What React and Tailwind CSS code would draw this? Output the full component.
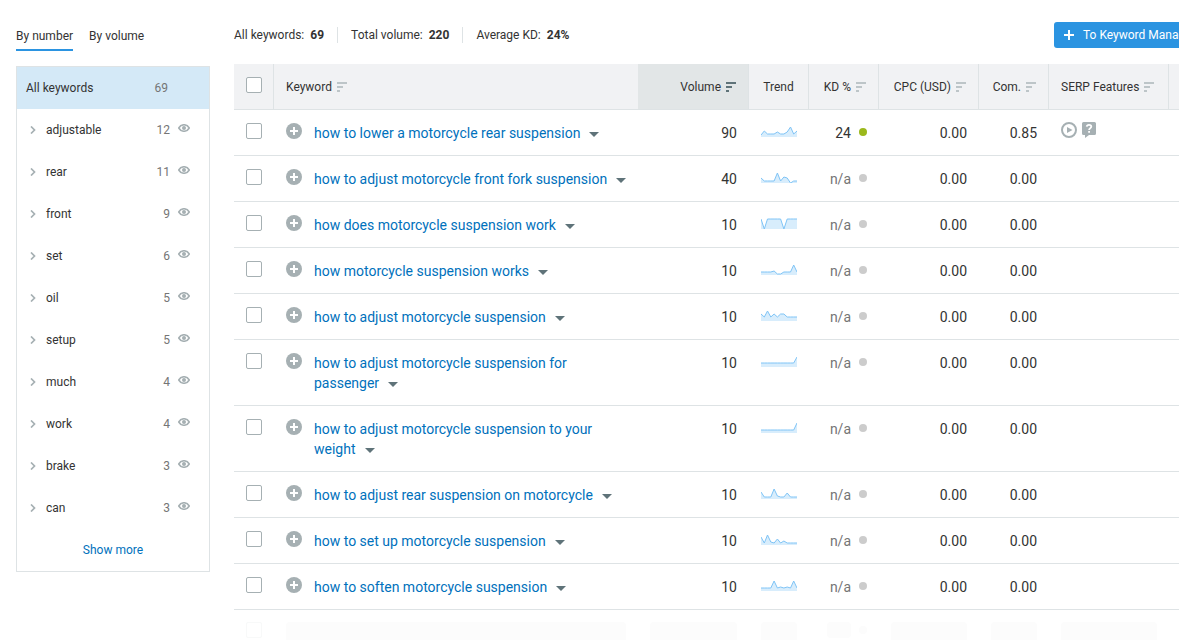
import { useState } from "react";

const groups = [
  { name: "adjustable", count: 12 },
  { name: "rear", count: 11 },
  { name: "front", count: 9 },
  { name: "set", count: 6 },
  { name: "oil", count: 5 },
  { name: "setup", count: 5 },
  { name: "much", count: 4 },
  { name: "work", count: 4 },
  { name: "brake", count: 3 },
  { name: "can", count: 3 },
];

// trend: twelve monthly points, 0 is the top of the chart and 11 the bottom
const keywords = [
  {
    keyword: "how to lower a motorcycle rear suspension",
    volume: 90,
    trend: [9, 5, 8, 8, 8, 6, 8, 8, 6, 1, 8, 5],
    kd: 24,
    com: "0.85",
    serp: true,
  },
  {
    keyword: "how to adjust motorcycle front fork suspension",
    volume: 40,
    trend: [6, 9, 9, 9, 9, 1, 9, 5, 6, 11, 9, 9],
    com: "0.00",
  },
  {
    keyword: "how does motorcycle suspension work",
    volume: 10,
    trend: [1, 11, 1, 1, 1, 1, 1, 11, 1, 1, 1, 1],
    com: "0.00",
  },
  {
    keyword: "how motorcycle suspension works",
    volume: 10,
    trend: [8, 8, 8, 8, 7, 10, 10, 8, 8, 8, 1, 8],
    com: "0.00",
  },
  {
    keyword: "how to adjust motorcycle suspension",
    volume: 10,
    trend: [4, 7, 1, 7, 4, 7, 4, 4, 7, 7, 7, 7],
    com: "0.00",
  },
  {
    keyword: "how to adjust motorcycle suspension for passenger",
    volume: 10,
    trend: [7, 7, 7, 7, 7, 7, 7, 7, 7, 7, 7, 1],
    com: "0.00",
  },
  {
    keyword: "how to adjust motorcycle suspension to your weight",
    volume: 10,
    trend: [8, 8, 8, 8, 8, 8, 8, 8, 8, 8, 8, 1],
    com: "0.00",
  },
  {
    keyword: "how to adjust rear suspension on motorcycle",
    volume: 10,
    trend: [4, 9, 9, 9, 1, 8, 9, 9, 5, 9, 9, 9],
    com: "0.00",
  },
  {
    keyword: "how to set up motorcycle suspension",
    volume: 10,
    trend: [3, 9, 1, 8, 9, 5, 9, 7, 9, 9, 9, 9],
    com: "0.00",
  },
  {
    keyword: "how to soften motorcycle suspension",
    volume: 10,
    trend: [8, 8, 8, 8, 1, 8, 7, 8, 7, 8, 1, 8],
    com: "0.00",
  },
];

function SortIcon({ active }) {
  return (
    <svg
      viewBox="0 0 10 10"
      className={
        active
          ? "w-[10px] h-[10px] shrink-0 text-[#5f7379]"
          : "w-[10px] h-[10px] shrink-0 text-[#bdc5c8]"
      }
      fill="currentColor"
    >
      <path d="M0 0h10v2H0zM0 4h6v2H0zM0 8h3v2H0z" />
    </svg>
  );
}

function EyeIcon() {
  return (
    <svg viewBox="0 0 12 8" className="w-3 h-2" fill="none">
      <path
        d="M0.7 4C2 1.8 3.800 0.700 6 0.700S10 1.800 11.300 4C10 6.200 8.200 7.300 6 7.300S2 6.200 0.700 4z"
        stroke="#a6b0b3"
        strokeWidth="1.500"
      />
      <circle cx="6" cy="4" r="2" fill="#a6b0b3" />
    </svg>
  );
}

function PlusCircleIcon() {
  return (
    <svg viewBox="0 0 16 16" className="w-4 h-4">
      <circle cx="8" cy="8" r="8" fill="#a6b0b3" />
      <path d="M7 4h2v3h3v2H9v3H7V9H4V7h3z" fill="#fff" />
    </svg>
  );
}

function Trend({ points }) {
  const line = points
    .map((y, i) => `${((i * 36) / 11).toFixed(1)},${y}`)
    .join(" ");

  return (
    <svg viewBox="0 0 36 11" className="w-9 h-[11px] mt-[3px]">
      <polygon points={`0,11 ${line} 36,11`} fill="#d8edfc" />
      <polyline points={line} fill="none" stroke="#7fc4f6" strokeWidth="1" />
    </svg>
  );
}

function Checkbox({ label }) {
  return (
    <input
      type="checkbox"
      aria-label={label}
      className="block appearance-none w-4 h-4 rounded-[2px] border border-[#a6b0b3] bg-white checked:bg-[#2b94e1]"
    />
  );
}

function HeadCell({ children, active, className }) {
  return (
    <th
      className={`h-[46px] px-3 font-normal text-xs border-b border-[#dee3e5] ${className}`}
    >
      <button type="button" className="inline-flex items-center gap-[5px]">
        {children}
        <SortIcon active={active} />
      </button>
    </th>
  );
}

function Sidebar() {
  const [tab, setTab] = useState("number");
  const activeTab = "pb-[5px] border-b-2 border-[#2b94e1]";
  const idleTab = "pb-[5px] border-b-2 border-transparent";

  return (
    <aside className="w-[194px] shrink-0 text-xs">
      <div className="flex gap-4 pt-7 leading-4">
        <button
          type="button"
          className={tab === "number" ? activeTab : idleTab}
          onClick={() => setTab("number")}
        >
          By number
        </button>
        <button
          type="button"
          className={tab === "volume" ? activeTab : idleTab}
          onClick={() => setTab("volume")}
        >
          By volume
        </button>
      </div>

      <div className="mt-[15px] border border-[#dee3e5]">
        <button
          type="button"
          className="w-full h-[42px] flex items-center justify-between pl-[9px] pr-[41px] bg-[#d4e9f7]"
        >
          All keywords
          <span className="text-[#757575]">69</span>
        </button>
        <ul>
          {groups.map((group) => (
            <li key={group.name} className="h-[42px] flex items-center">
              <button type="button" className="flex flex-1 items-center">
                <svg
                  viewBox="0 0 6 8"
                  className="w-[6px] h-2 ml-[13px] mr-[10px]"
                  fill="none"
                  stroke="#a6b0b3"
                  strokeWidth="1.700"
                >
                  <path d="M1 0.500L4.500 4L1 7.500" />
                </svg>
                {group.name}
                <span className="ml-auto text-[#757575]">{group.count}</span>
              </button>
              <button
                type="button"
                aria-label={`Hide ${group.name}`}
                className="ml-2 mr-[19px] mb-1"
              >
                <EyeIcon />
              </button>
            </li>
          ))}
        </ul>
        <button
          type="button"
          className="w-full h-[42px] flex items-center justify-center text-[#0071bc]"
        >
          Show more
        </button>
      </div>
    </aside>
  );
}

function Toolbar() {
  return (
    <div className="h-16 pt-[22px] flex items-start justify-between text-xs">
      <dl className="flex items-center pt-[5px] leading-4">
        <div className="flex gap-[6px] pr-[13px]">
          <dt>All keywords:</dt>
          <dd className="font-bold">69</dd>
        </div>
        <div className="flex gap-[6px] px-[13px] border-l border-[#dee3e5]">
          <dt>Total volume:</dt>
          <dd className="font-bold">220</dd>
        </div>
        <div className="flex gap-[6px] pl-[13px] border-l border-[#dee3e5]">
          <dt>Average KD:</dt>
          <dd className="font-bold">24%</dd>
        </div>
      </dl>
      <button
        type="button"
        className="w-[160px] h-[26px] pl-[10px] flex items-center gap-[9px] rounded-[3px] bg-[#2b94e1] text-white whitespace-nowrap"
      >
        <svg viewBox="0 0 10 10" className="w-[10px] h-[10px]" fill="#fff">
          <path d="M4 0h2v4h4v2H6v4H4V6H0V4h4z" />
        </svg>
        To Keyword Manager
      </button>
    </div>
  );
}

function KeywordRow({ row }) {
  return (
    <tr className="align-top [&>td]:border-b [&>td]:border-[#dee3e5]">
      <td className="pt-[13px] pb-3 pl-3">
        <Checkbox label={`Select ${row.keyword}`} />
      </td>
      <td className="pt-[13px] pb-3 pl-3 pr-1">
        <div className="flex items-start gap-3">
          <button type="button" aria-label={`Add ${row.keyword}`}>
            <PlusCircleIcon />
          </button>
          <div>
            <a href="#keyword" className="text-[#0071bc]">
              {row.keyword}
            </a>
            <svg
              viewBox="0 0 10 5"
              className="inline-block align-middle w-[10px] h-[5px] ml-[9px]"
              fill="#5f7379"
            >
              <path d="M0 0h10L5 5z" />
            </svg>
          </div>
        </div>
      </td>
      <td className="pt-[13px] pb-3 pr-3 text-right">{row.volume}</td>
      <td className="pt-[13px] pb-3 pl-3">
        <Trend points={row.trend} />
      </td>
      <td className="pt-[13px] pb-3 pr-3">
        <div className="flex items-center justify-end gap-2">
          <span className={row.kd ? "" : "text-[#757575]"}>
            {row.kd ?? "n/a"}
          </span>
          <span
            className={
              row.kd
                ? "w-2 h-2 mb-[2px] rounded-full bg-[#9bb81c]"
                : "w-2 h-2 mb-[2px] rounded-full bg-[#cccccc]"
            }
          />
        </div>
      </td>
      <td className="pt-[13px] pb-3 pr-3 text-right">0.00</td>
      <td className="pt-[13px] pb-3 pr-3 text-right">{row.com}</td>
      <td className="pt-3 pb-3 pl-3">
        {row.serp && (
          <div className="flex gap-[5px]">
            <svg viewBox="0 0 16 16" className="w-4 h-4" fill="none">
              <circle cx="8" cy="8" r="7" stroke="#a6b0b3" strokeWidth="2" />
              <path d="M6 5l5.500 3L6 11z" fill="#a6b0b3" />
            </svg>
            <svg viewBox="0 0 14 16" className="w-[14px] h-4" fill="none">
              <path
                d="M1.500 0h11A1.500 1.500 0 0 1 14 1.500v10a1.500 1.500 0 0 1-1.500 1.500H7l-4 3v-3H1.500A1.500 1.500 0 0 1 0 11.500v-10A1.500 1.500 0 0 1 1.500 0z"
                fill="#a6b0b3"
              />
              <path
                d="M4.700 4.600C4.900 3.300 5.800 2.800 7 2.800c1.300 0 2.300 0.600 2.300 1.800 0 1.700-2.200 1.500-2.200 3.300"
                stroke="#fff"
                strokeWidth="1.800"
              />
              <path d="M6.200 9h1.800v1.700H6.200z" fill="#fff" />
            </svg>
          </div>
        )}
      </td>
      <td />
    </tr>
  );
}

function SkeletonRow() {
  return (
    <tr className="align-top">
      <td className="pt-3 pl-3">
        <div className="w-4 h-4 rounded-[2px] border border-[#f8f9f9]" />
      </td>
      <td className="pt-3 pl-3 pr-3">
        <div className="h-7 rounded bg-[#fcfcfc]" />
      </td>
      <td className="pt-3 pl-3 pr-3">
        <div className="h-7 rounded bg-[#fcfcfc]" />
      </td>
      <td className="pt-3 pl-3 pr-3">
        <div className="h-7 rounded bg-[#fcfcfc]" />
      </td>
      <td className="pt-3 pr-3">
        <div className="flex items-center justify-end gap-2">
          <div className="w-6 h-4 rounded bg-[#fcfcfc]" />
          <div className="w-2 h-2 rounded-full bg-[#fcfcfc]" />
        </div>
      </td>
      <td className="pt-3 pl-3 pr-3">
        <div className="h-7 rounded bg-[#fcfcfc]" />
      </td>
      <td className="pt-3 pl-3 pr-3">
        <div className="h-7 rounded bg-[#fcfcfc]" />
      </td>
      <td className="pt-3 pl-3 pr-3">
        <div className="h-7 rounded bg-[#fcfcfc]" />
      </td>
      <td />
    </tr>
  );
}

function App() {
  return (
    <div className="h-screen overflow-hidden flex gap-6 pl-4 bg-white text-[#333333] font-[Roboto,sans-serif]">
      <Sidebar />

      <main className="flex-1 min-w-0">
        <div className="min-w-[980px]">
          <Toolbar />
          <table className="w-full table-fixed border-separate border-spacing-0 text-sm leading-5">
            <colgroup>
              <col className="w-10" />
              <col />
              <col className="w-[111px]" />
              <col className="w-[60px]" />
              <col className="w-[70px]" />
              <col className="w-[100px]" />
              <col className="w-[70px]" />
              <col className="w-[120px]" />
              <col className="w-[45px]" />
            </colgroup>
            <thead className="bg-[#f1f2f4]">
              <tr>
                <th className="h-[46px] pl-3 pb-1 border-b border-r border-[#dee3e5]">
                  <Checkbox label="Select all keywords" />
                </th>
                <HeadCell className="text-left">Keyword</HeadCell>
                <HeadCell active className="text-right border-r bg-[#e2e6e7]">
                  Volume
                </HeadCell>
                <th className="font-normal text-xs border-b border-r border-[#dee3e5]">
                  Trend
                </th>
                <HeadCell className="text-right border-r">KD %</HeadCell>
                <HeadCell className="text-right border-r whitespace-nowrap">
                  CPC (USD)
                </HeadCell>
                <HeadCell className="text-right border-r">Com.</HeadCell>
                <HeadCell className="text-left border-r whitespace-nowrap">
                  SERP Features
                </HeadCell>
                <th className="border-b border-[#dee3e5]" />
              </tr>
            </thead>
            <tbody>
              {keywords.map((row) => (
                <KeywordRow key={row.keyword} row={row} />
              ))}
              <SkeletonRow />
            </tbody>
          </table>
        </div>
      </main>
    </div>
  );
}

export default App;
